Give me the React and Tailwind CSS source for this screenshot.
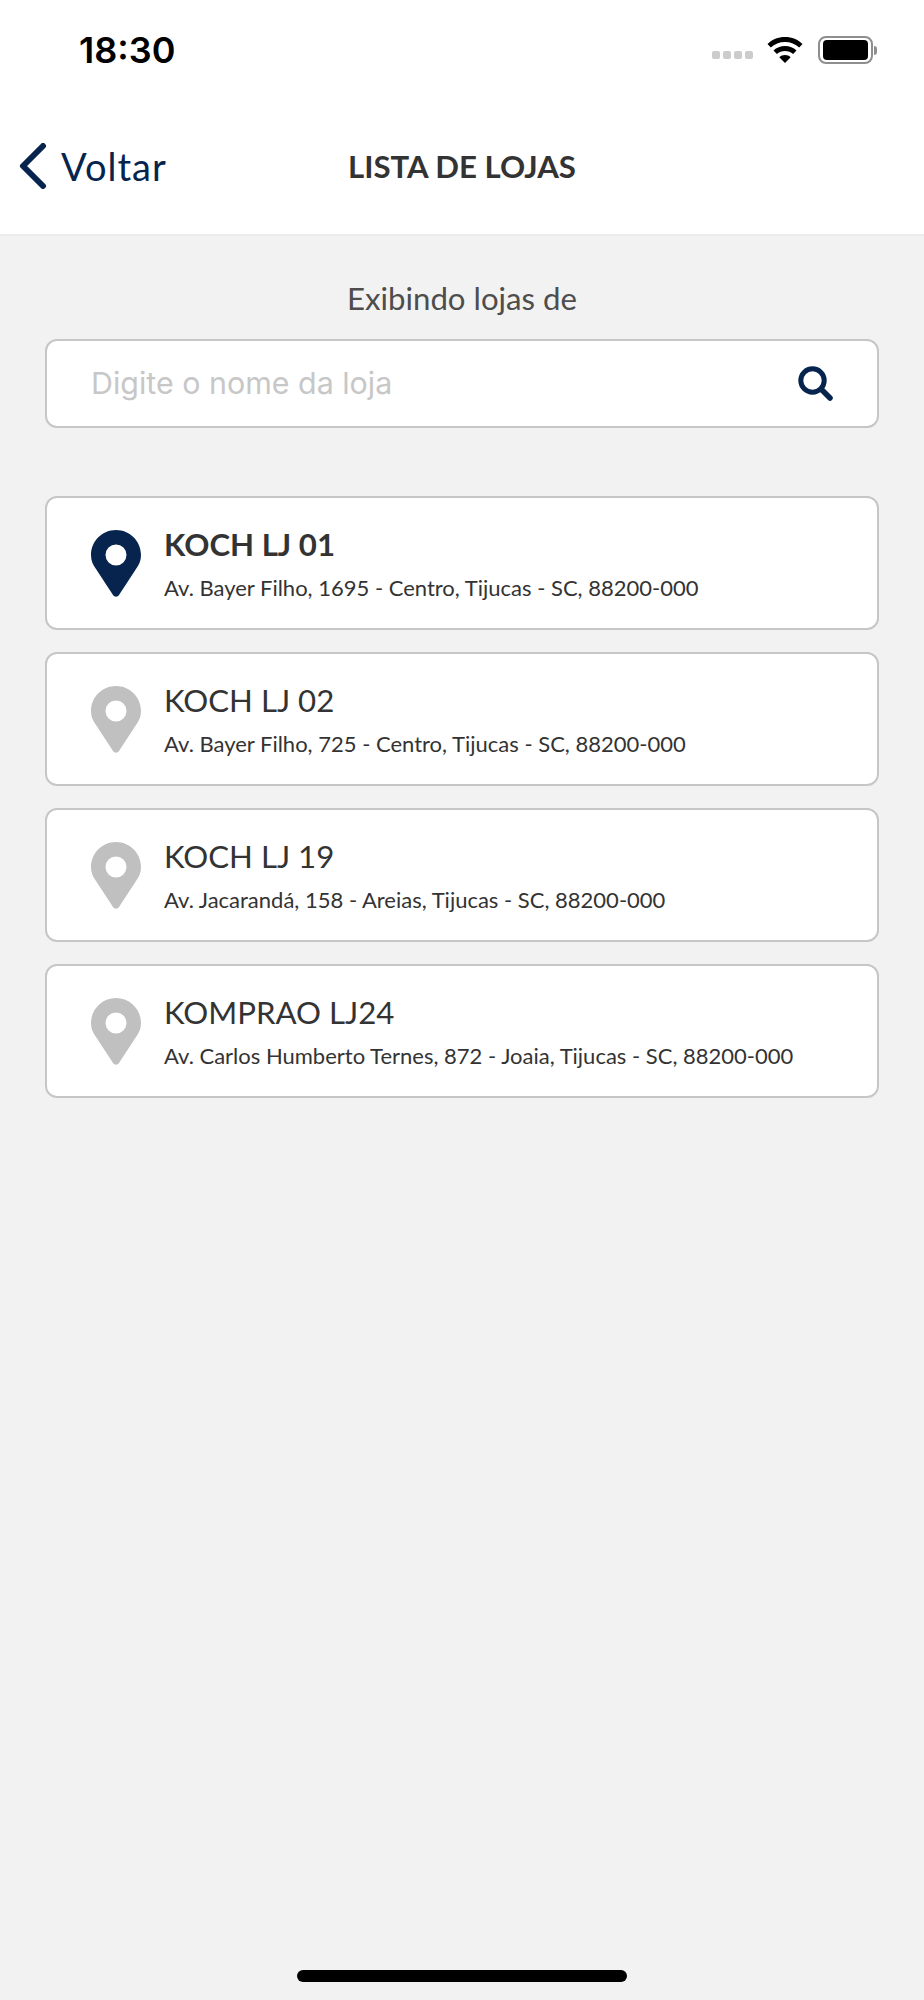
import React from 'react';

const stores = [
    { name: 'KOCH LJ 01', address: 'Av. Bayer Filho, 1695 - Centro, Tijucas - SC, 88200-000', active: true },
    { name: 'KOCH LJ 02', address: 'Av. Bayer Filho, 725 - Centro, Tijucas - SC, 88200-000' },
    { name: 'KOCH LJ 19', address: 'Av. Jacarandá, 158 - Areias, Tijucas - SC, 88200-000' },
    { name: 'KOMPRAO LJ24', address: 'Av. Carlos Humberto Ternes, 872 - Joaia, Tijucas - SC, 88200-000' },
];

const Pin = ({ active }) => (
    <svg width="50" height="67" viewBox="0 0 50 67" className={active ? 'text-[#06244d]' : 'text-[#c0c0c0]'}>
        <path
            fill="currentColor"
            fillRule="evenodd"
            d="M25 0C11.2 0 0 11.2 0 25c0 5.500 1.800 9.500 5 14l17 26c1.500 2.200 4.500 2.200 6 0l17-26c3.200-4.500 5-8.500 5-14C50 11.200 38.800 0 25 0Zm0 14.500a10.500 10.500 0 1 1 0 21 10.500 10.500 0 0 1 0-21Z"
        />
    </svg>
);

const SearchIcon = () => (
    <svg width="35" height="35" viewBox="0 0 35 35" fill="none" stroke="#06244d" strokeLinecap="round">
        <circle cx="14.500" cy="14.500" r="11.700" strokeWidth="5" />
        <path d="M24 24l8 8" strokeWidth="5.500" />
    </svg>
);

const StatusBar = () => (
    <div className="flex h-[100px] items-center justify-between pl-[79px] pr-[47px]">
        <span className="font-['Inter',sans-serif] text-[36px] font-semibold leading-none text-black">18:30</span>
        <div className="flex items-center">
            <div className="mt-[9px] mr-[14px] flex gap-[3px]">
                <span className="h-[8px] w-[8px] rounded-[2px] bg-[#cccccc]" />
                <span className="h-[8px] w-[8px] rounded-[2px] bg-[#cccccc]" />
                <span className="h-[8px] w-[8px] rounded-[2px] bg-[#cccccc]" />
                <span className="h-[8px] w-[8px] rounded-[2px] bg-[#cccccc]" />
            </div>
            <svg width="36" height="28" viewBox="0 0 36 28" className="mr-[15px]">
                <path d="M18 1C11 1 5 3.500.5 8l3.300 3.600C7.500 8 12.500 6 18 6s10.500 2 14.200 5.600L35.500 8C31 3.500 25 1 18 1Z" />
                <path d="M18 10c-4.500 0-8.500 1.700-11.500 4.500l3.400 3.600C12 16.200 14.900 15 18 15s6 1.200 8.100 3.100l3.400-3.600C26.500 11.700 22.500 10 18 10Z" />
                <path d="M18 19c-2.200 0-4.200.8-5.700 2.200L18 27l5.700-5.800C22.200 19.800 20.200 19 18 19Z" />
            </svg>
            <div className="flex items-center">
                <div className="flex h-[28px] w-[55px] items-center justify-center rounded-[8px] border-2 border-[#8e8e8e]">
                    <div className="h-[20px] w-[45px] rounded-[4px] bg-black" />
                </div>
                <div className="ml-[1px] h-[9px] w-[3px] rounded-r-[3px] bg-[#8e8e8e]" />
            </div>
        </div>
    </div>
);

const App = () => {
    return (
        <div className="flex h-[2000px] flex-col bg-[#f2f2f2] font-['Lato',sans-serif]">
            <header className="h-[236px] border-b-2 border-[#ebebeb] bg-white">
                <StatusBar />
                <div className="relative flex h-[134px] items-center justify-center">
                    <div className="absolute left-[19px] top-[43px] flex items-center text-[#06244d]">
                        <svg width="28" height="46" viewBox="0 0 28 46" fill="none" stroke="currentColor" strokeWidth="6" strokeLinecap="round" strokeLinejoin="round">
                            <path d="M24 3 4 23l20 20" />
                        </svg>
                        <span className="ml-[14px] text-[38px] leading-none tracking-[1px]">Voltar</span>
                    </div>
                    <h1 className="text-[31.200px] font-bold leading-none text-[#333333]">LISTA DE LOJAS</h1>
                </div>
            </header>

            <main className="flex flex-1 flex-col px-[45px]">
                <p className="mt-[44px] text-center text-[31.200px] leading-[36px] text-[#4d4d4d]">Exibindo lojas de</p>
                <div className="mt-[23px] flex h-[89px] items-center justify-between rounded-[12px] border-2 border-[#c6c6c6] bg-white pl-[44px] pr-[44px]">
                    <span className="font-['Inter',sans-serif] text-[30.400px] text-[#c7c7c7]">Digite o nome da loja</span>
                    <SearchIcon />
                </div>

                <div className="mt-[68px] flex flex-col gap-[22px]">
                    {stores.map((store) => (
                        <div key={store.name} className="flex h-[134px] items-center rounded-[12px] border-2 border-[#c6c6c6] bg-white pl-[44px]">
                            <Pin active={store.active} />
                            <div className="ml-[23px]">
                                <div className={`text-[31.200px] leading-[40px] text-[#333333] ${store.active ? 'font-bold' : ''}`}>{store.name}</div>
                                <div className="mt-[9px] text-[22px] leading-[30px] text-[#333333]">{store.address}</div>
                            </div>
                        </div>
                    ))}
                </div>
            </main>

            <div className="flex h-[40px] justify-center bg-[#f2f2f2] pt-[10px]">
                <div className="h-[12px] w-[330px] rounded-full bg-black" />
            </div>
        </div>
    );
};

export default App;
